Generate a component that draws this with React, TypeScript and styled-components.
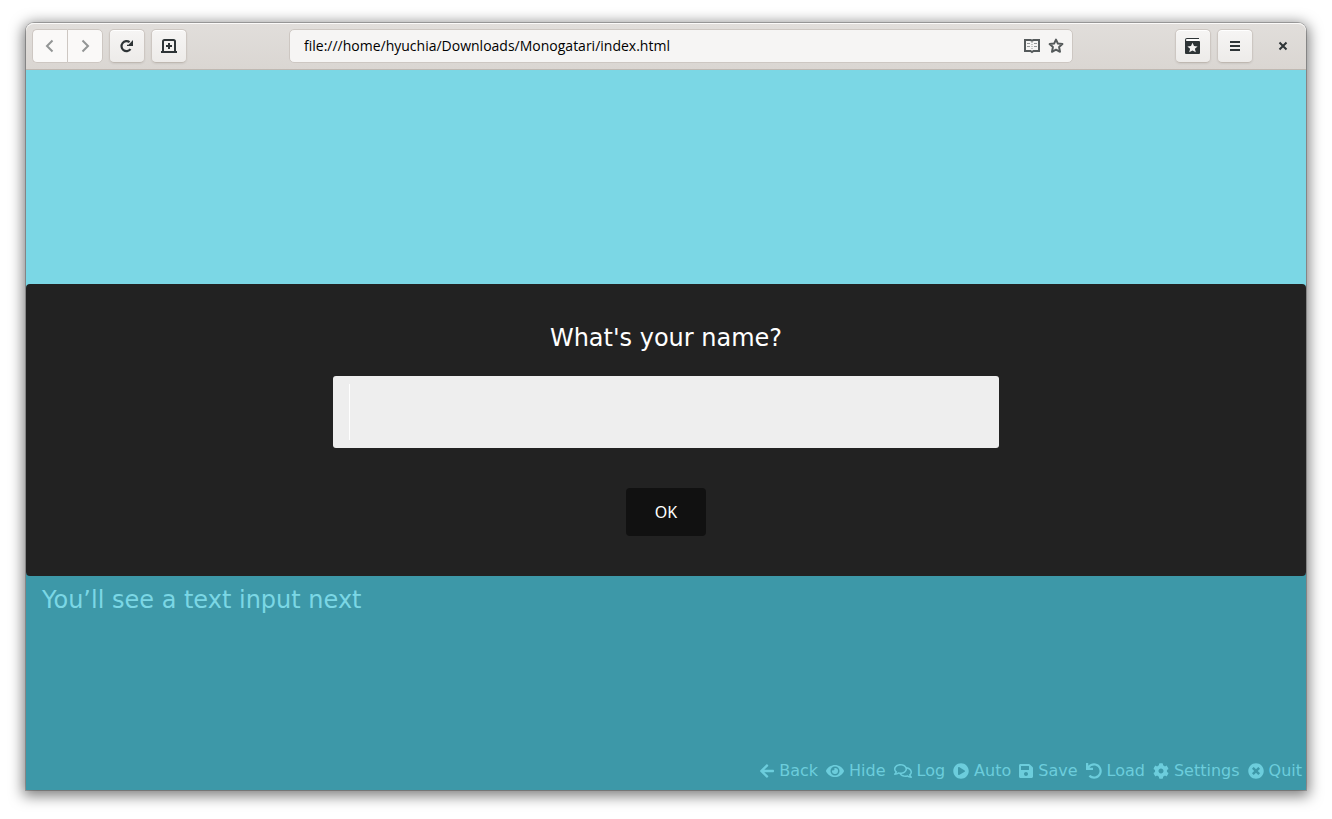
import React from "react";
import styled, { createGlobalStyle, css } from "styled-components";
import {
  FaArrowLeft,
  FaEye,
  FaRegComments,
  FaPlayCircle,
  FaSave,
  FaUndo,
  FaCog,
  FaTimesCircle,
} from "react-icons/fa";

const GlobalStyle = createGlobalStyle`
  *, *::before, *::after { box-sizing: border-box; }
  body { margin: 0; background: #fff; font-family: "DejaVu Sans", sans-serif; }
  button, input { font: inherit; margin: 0; }
`;

const Desktop = styled.div`
  display: flex;
  min-height: 100vh;
  padding: 23px 26px 29px;
`;

const BrowserWindow = styled.div`
  flex: 1;
  display: flex;
  flex-direction: column;
  min-width: 0;
  border-radius: 8px 8px 0 0;
  box-shadow: 0 3px 14px 3px rgba(0, 0, 0, 0.5), 0 0 0 1px rgba(0, 0, 0, 0.23);
`;

const HeaderBar = styled.header`
  display: flex;
  align-items: center;
  gap: 6px;
  height: 47px;
  padding: 0 6px;
  border-bottom: 1px solid #bfb8b1;
  border-radius: 8px 8px 0 0;
  background: linear-gradient(#e1dedb, #dad6d2);
  box-shadow: inset 0 1px #fbfaf9;
`;

const Linked = styled.div`
  display: flex;
`;

const buttonBase = css`
  display: flex;
  align-items: center;
  justify-content: center;
  height: 34px;
  padding: 0;
  svg { display: block; }
`;

const NavButton = styled.button<{ $side: "left" | "right" }>`
  ${buttonBase}
  width: ${(p) => (p.$side === "left" ? 35 : 36)}px;
  border: 1px solid #cdc7c2;
  border-right-width: ${(p) => (p.$side === "left" ? 0 : 1)}px;
  border-radius: ${(p) => (p.$side === "left" ? "5px 0 0 5px" : "0 5px 5px 0")};
  background: #faf9f8;
  color: #929595;
`;

const ToolButton = styled.button`
  ${buttonBase}
  width: 36px;
  border: 1px solid #cdc7c2;
  border-bottom-color: #bfb8b1;
  border-radius: 5px;
  background: linear-gradient(#f6f5f4, #edebe9);
  box-shadow: inset 0 1px #fff, 0 1px 2px rgba(0, 0, 0, 0.07);
  color: #2e3436;
`;

const CloseButton = styled.button`
  ${buttonBase}
  width: 34px;
  margin-left: 7px;
  border: 0;
  background: none;
  color: #2e3436;
`;

const AddressBar = styled.div`
  flex: 1;
  display: flex;
  align-items: center;
  gap: 8px;
  min-width: 0;
  max-width: 784px;
  height: 34px;
  margin: 0 auto;
  padding: 0 8px 0 14px;
  border: 1px solid #cdc7c2;
  border-radius: 5px;
  background: #f6f5f4;
  color: #555a5b;
  svg { display: block; flex: none; }
`;

const AddressInput = styled.input`
  flex: 1;
  min-width: 0;
  padding: 0;
  border: 0;
  outline: 0;
  background: none;
  color: #000;
  font-family: "Open Sans", "Noto Sans", sans-serif;
  font-size: 14px;
  line-height: 20px;
`;

const EntryIcon = styled.button`
  ${buttonBase}
  width: 16px;
  border: 0;
  background: none;
  color: inherit;
`;

const Scene = styled.main`
  position: relative;
  flex: 1;
  display: flex;
  flex-direction: column;
  justify-content: flex-end;
  min-height: 480px;
  background: #7bd7e5;
`;

const TextBox = styled.section`
  display: flex;
  flex-direction: column;
  justify-content: space-between;
  height: 30%;
  min-height: 180px;
  background: #3d98a8;
  color: #7bd7e5;
`;

const Dialogue = styled.p`
  margin: 0;
  padding: 8px 16px;
  font-size: 24px;
  line-height: 36px;
`;

const QuickMenu = styled.nav`
  display: flex;
  justify-content: flex-end;
  gap: 8px;
  padding: 8px 4px 7px;
`;

const QuickButton = styled.button<{ $iconWidth: number }>`
  display: flex;
  align-items: center;
  gap: 5px;
  padding: 0;
  border: 0;
  background: none;
  color: #6ccddc;
  font-size: 16px;
  line-height: 24px;
  svg {
    flex: none;
    width: ${(p) => p.$iconWidth}px;
    height: 16px;
  }
`;

const PromptDialog = styled.form`
  position: absolute;
  top: 50%;
  left: 0;
  right: 0;
  transform: translateY(-50%);
  display: flex;
  flex-direction: column;
  align-items: center;
  padding: 40px 16px;
  border-radius: 4px;
  background: #222;
`;

const PromptLabel = styled.label`
  color: #fff;
  font-size: 24px;
  line-height: 28px;
`;

const PromptInput = styled.input`
  width: 666px;
  max-width: 100%;
  height: 72px;
  margin: 24px 0 40px;
  padding: 8px 16px;
  border: 0;
  border-radius: 3px;
  outline: 0;
  background: linear-gradient(#fff, #fff) 16px 8px / 1px 56px no-repeat #eee;
  font-size: 24px;
`;

const OkButton = styled.button`
  width: 80px;
  height: 48px;
  padding: 0;
  border: 0;
  border-radius: 4px;
  background: #111;
  color: #fff;
  font-family: "Noto Sans", sans-serif;
  font-size: 16px;
`;

const Chevron = ({ d }: { d: string }) => (
  <svg width="16" height="16" viewBox="0 0 16 16" fill="none" stroke="currentColor" strokeWidth="2">
    <path d={d} />
  </svg>
);

const ReloadIcon = () => (
  <svg width="16" height="16" viewBox="0 0 16 16">
    <path d="M11.500 11.200A5 5 0 1 1 10.600 4.200" fill="none" stroke="currentColor" strokeWidth="2.200" />
    <path d="M14 2v6H8V6.800h1.500z" fill="currentColor" />
  </svg>
);

const NewTabIcon = () => (
  <svg width="16" height="16" viewBox="0 0 16 16" fill="none" stroke="currentColor" strokeWidth="2">
    <path d="M2 14V3.500Q2 2 3.500 2h9Q14 2 14 3.500V14M0 14h16M5 8h6M8 5v6" />
  </svg>
);

const ReaderIcon = () => (
  <svg width="16" height="16" viewBox="0 0 16 16" fill="none" stroke="currentColor">
    <path d="M1 2h5.500L8 2.700 9.500 2H15v11H9.500L8 14l-1.500-1H1z" strokeWidth="2" />
    <path d="M3 5.500h3M3 8.500h3M10 5.500h3M10 8.500h3M8 4v1M8 6v1M8 8v1M8 10v1" opacity=".6" />
  </svg>
);

const StarIcon = () => (
  <svg width="16" height="16" viewBox="0 0 16 16" fill="none" stroke="currentColor" strokeWidth="2">
    <path strokeLinejoin="round" d="M8 1.600l1.900 4 4.500.5-3.300 3 .9 4.700L8 11.700l-4 2.100.9-4.700-3.300-3 4.500-.5z" />
  </svg>
);

const BookmarksIcon = () => (
  <svg width="16" height="16" viewBox="0 0 16 16">
    <path
      fill="currentColor"
      d="M2 0h12v1H2.500Q1 1 1 2t1 1h12q1 0 1 1v11q0 1-1 1H1q-1 0-1-1V2Q0 0 2 0z"
    />
    <path fill="#fff" d="M1.500 1.200H14V3H1.500z" />
    <path fill="#f4f3f2" d="M7.500 4.800l1.500 3.300 3.600.3-2.700 2.400.9 3.500-3.300-1.900-3.300 1.900.9-3.500-2.700-2.400 3.600-.3z" />
  </svg>
);

const MenuIcon = () => (
  <svg width="16" height="16" viewBox="0 0 16 16" fill="currentColor">
    <path d="M3 3h10v2H3zM3 7h10v2H3zM3 11h10v2H3z" />
  </svg>
);

const CloseIcon = () => (
  <svg width="16" height="16" viewBox="0 0 16 16" fill="none" stroke="currentColor" strokeWidth="2">
    <path d="M4.500 4.500l7 7M11.500 4.500l-7 7" />
  </svg>
);

const quickActions = [
  { label: "Back", Icon: FaArrowLeft, iconWidth: 14 },
  { label: "Hide", Icon: FaEye, iconWidth: 18 },
  { label: "Log", Icon: FaRegComments, iconWidth: 18 },
  { label: "Auto", Icon: FaPlayCircle, iconWidth: 16 },
  { label: "Save", Icon: FaSave, iconWidth: 14 },
  { label: "Load", Icon: FaUndo, iconWidth: 16 },
  { label: "Settings", Icon: FaCog, iconWidth: 16 },
  { label: "Quit", Icon: FaTimesCircle, iconWidth: 16 },
];

export default function App() {
  return (
    <>
      <GlobalStyle />
      <Desktop>
        <BrowserWindow>
          <HeaderBar>
            <Linked>
              <NavButton $side="left" aria-label="Go back">
                <Chevron d="M10.500 2.500L5 8l5.500 5.500" />
              </NavButton>
              <NavButton $side="right" aria-label="Go forward">
                <Chevron d="M5.500 2.500L11 8l-5.500 5.500" />
              </NavButton>
            </Linked>
            <ToolButton aria-label="Reload">
              <ReloadIcon />
            </ToolButton>
            <ToolButton aria-label="New tab">
              <NewTabIcon />
            </ToolButton>
            <AddressBar>
              <AddressInput
                aria-label="Address"
                defaultValue="file:///home/hyuchia/Downloads/Monogatari/index.html"
              />
              <EntryIcon aria-label="Reader mode">
                <ReaderIcon />
              </EntryIcon>
              <EntryIcon aria-label="Bookmark this page">
                <StarIcon />
              </EntryIcon>
            </AddressBar>
            <ToolButton aria-label="Bookmarks">
              <BookmarksIcon />
            </ToolButton>
            <ToolButton aria-label="Menu">
              <MenuIcon />
            </ToolButton>
            <CloseButton aria-label="Close">
              <CloseIcon />
            </CloseButton>
          </HeaderBar>
          <Scene>
            <TextBox>
              <Dialogue>You’ll see a text input next</Dialogue>
              <QuickMenu>
                {quickActions.map(({ label, Icon, iconWidth }) => (
                  <QuickButton key={label} $iconWidth={iconWidth}>
                    <Icon aria-hidden />
                    {label}
                  </QuickButton>
                ))}
              </QuickMenu>
            </TextBox>
            <PromptDialog onSubmit={(e) => e.preventDefault()}>
              <PromptLabel htmlFor="player-name">What's your name?</PromptLabel>
              <PromptInput id="player-name" type="text" autoComplete="off" />
              <OkButton type="submit">OK</OkButton>
            </PromptDialog>
          </Scene>
        </BrowserWindow>
      </Desktop>
    </>
  );
}
